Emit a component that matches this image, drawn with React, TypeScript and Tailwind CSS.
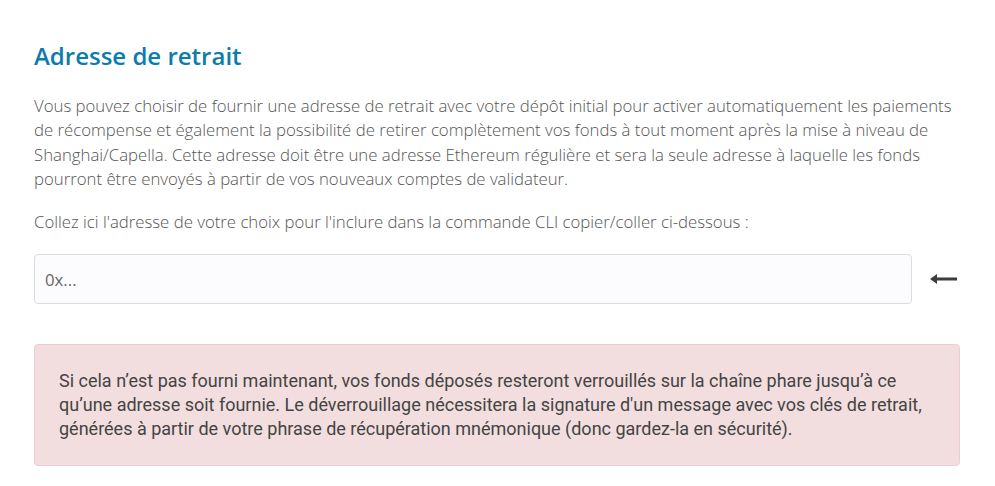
export default function App() {
  return (
    <div className="min-h-screen bg-white px-[34px] pt-[42px] font-['Open_Sans',sans-serif]">
      <div className="w-[926px]">
        <h2 className="text-[24px] leading-[1.2] font-semibold text-[#0c7cab]">Adresse de retrait</h2>

        <p className="mt-[23px] text-[16.75px] leading-[24.5px] font-light text-[#555]">
          Vous pouvez choisir de fournir une adresse de retrait avec votre dépôt initial pour activer automatiquement les paiements
          <br />
          de récompense et également la possibilité de retirer complètement vos fonds à tout moment après la mise à niveau de
          <br />
          Shanghai/Capella. Cette adresse doit être une adresse Ethereum régulière et sera la seule adresse à laquelle les fonds
          <br />
          pourront être envoyés à partir de vos nouveaux comptes de validateur.
        </p>

        <p className="mt-[18px] text-[16.75px] leading-[24.5px] font-light text-[#555]">
          Collez ici l'adresse de votre choix pour l'inclure dans la commande CLI copier/coller ci-dessous :
        </p>

        <div className="mt-[20px] flex items-center">
          <input
            type="text"
            placeholder="0x..."
            className="h-[50px] flex-1 rounded-[4px] border border-[#dcdcdc] bg-[#fcfcfe] px-[10px] text-[16.75px] font-normal text-[#333] placeholder:text-[#666] outline-none"
          />
          <div className="flex w-[48px] justify-start pl-[18px]">
            <svg width="27" height="10" viewBox="0 0 27 10">
              <polygon points="0,5 7,0 7,3.5 27,3.5 27,6.5 7,6.5 7,10" fill="#3d3d3d" />
            </svg>
          </div>
        </div>

        <div className="mt-[40px] rounded-[4px] border border-[#ebcdd2] bg-[#f2dede] px-6 py-[24px] font-['Roboto',sans-serif] text-[18px] leading-[24px] font-normal text-[#444]">
          Si cela n’est pas fourni maintenant, vos fonds déposés resteront verrouillés sur la chaîne phare jusqu’à ce
          <br />
          qu’une adresse soit fournie. Le déverrouillage nécessitera la signature d'un message avec vos clés de retrait,
          <br />
          générées à partir de votre phrase de récupération mnémonique (donc gardez-la en sécurité).
        </div>
      </div>
    </div>
  );
}
